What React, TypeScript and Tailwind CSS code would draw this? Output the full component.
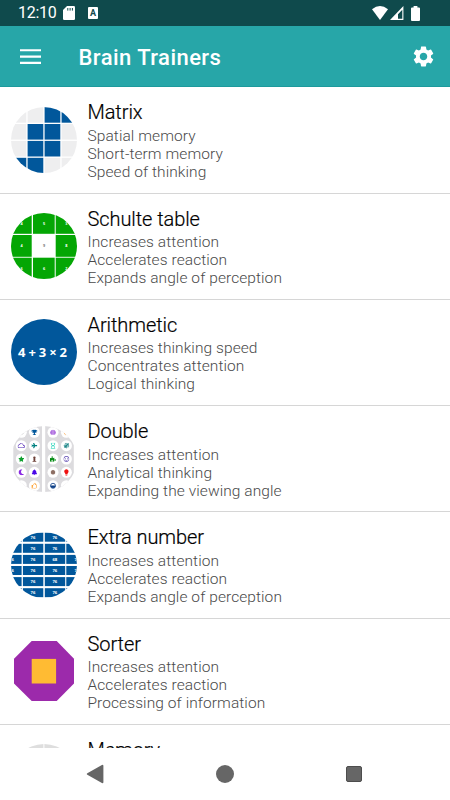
import type { ReactNode } from 'react'
import type { IconType } from 'react-icons'
import {
  FaBell,
  FaCertificate,
  FaChessPawn,
  FaMoon,
  FaPlane,
  FaPuzzlePiece,
  FaRegHourglass,
  FaRegSmile,
  FaRegThumbsUp,
  FaSatellite,
  FaStar,
  FaTrophy,
  FaBrain,
} from 'react-icons/fa'
import { MdLightbulb, MdOutlineCloud, MdSettings } from 'react-icons/md'

interface Trainer {
  title: string
  lines: string[]
  icon: ReactNode
}

function RoundIcon({ id, children }: { id: string; children: ReactNode }) {
  return (
    <svg className="w-[66px] h-[66px]" viewBox="0 0 66 66">
      <clipPath id={id}>
        <circle cx="33" cy="33" r="33" />
      </clipPath>
      <g clipPath={`url(#${id})`}>{children}</g>
    </svg>
  )
}

function MatrixIcon() {
  const cells = ['0011', '0110', '0110', '1100']

  return (
    <RoundIcon id="matrix">
      {cells.map((row, y) =>
        row.split('').map((cell, x) => (
          <rect
            key={`${x}-${y}`}
            x={x * 17 - 0.4}
            y={y * 16.9 + 0.1}
            width="15.7"
            height="15.6"
            fill={cell === '1' ? '#01579b' : '#eeeeef'}
          />
        ))
      )}
    </RoundIcon>
  )
}

function SchulteIcon() {
  const starts = [-1, 22, 44.7]
  const numbers = [['4', '5', '3'], ['4', '9', '8'], ['6', '6', '2']]
  const centers = [10.5, 33, 55.3]

  return (
    <RoundIcon id="schulte">
      {numbers.map((row, y) =>
        row.map((n, x) => {
          const middle = x === 1 && y === 1
          return (
            <g key={`${x}-${y}`}>
              <rect
                x={starts[x]}
                y={starts[y]}
                width="21.7"
                height="21.8"
                fill={middle ? '#fff' : '#04a604'}
              />
              <text
                x={centers[x]}
                y={centers[y] + 1.4}
                textAnchor="middle"
                className="font-['Open_Sans',sans-serif] text-[3.8px] font-bold"
                fill={middle ? '#777' : '#fff'}
              >
                {n}
              </text>
            </g>
          )
        })
      )}
    </RoundIcon>
  )
}

function ArithmeticIcon() {
  return (
    <RoundIcon id="arithmetic">
      <rect width="66" height="66" fill="#01579b" />
      <text
        x="31.5"
        y="38"
        textAnchor="middle"
        textLength="49"
        className="font-['Open_Sans',sans-serif] text-[13px] font-bold"
        fill="#fff"
      >
        4 + 3 × 2
      </text>
    </RoundIcon>
  )
}

function DoubleIcon() {
  const columns = [10.3, 23.4, 42, 55.4]
  const items: ([IconType, string] | null)[][] = [
    [null, [FaTrophy, '#01579b'], [FaBrain, '#b070e0'], null],
    [[MdOutlineCloud, '#4a1fb0'], [FaPlane, '#008080'], [FaRegHourglass, '#1dd3b8'], [FaSatellite, '#20888a']],
    [[FaStar, '#10a030'], [FaChessPawn, '#6d4038'], [FaPuzzlePiece, '#008a10'], [FaRegSmile, '#5a45b0']],
    [[FaMoon, '#8a2be2'], [FaBell, '#4a08e8'], [FaCertificate, '#8d6e63'], [MdLightbulb, '#f01010']],
    [null, [FaRegThumbsUp, '#ffa030'], null, null],
  ]

  return (
    <RoundIcon id="double">
      <rect x="2.3" width="28.7" height="66" fill="#dcdbde" />
      <rect x="34.2" width="28.6" height="66" fill="#dcdbde" />
      {items.map((row, y) =>
        row.map((item, x) => {
          const cx = columns[x]
          const cy = 6.3 + y * 13.35
          const Icon = item?.[0]
          let size = 6
          if (Icon === MdOutlineCloud || Icon === MdLightbulb) size = 7.4
          if (Icon === FaCertificate) size = 5
          return (
            <g key={`${x}-${y}`}>
              <circle cx={cx} cy={cy} r="5.5" fill="#fff" />
              {Icon && (
                <Icon x={cx - size / 2} y={cy - size / 2} size={size} color={item[1]} />
              )}
            </g>
          )
        })
      )}
      <path d="m10.4 8.8 1.8-1.8" stroke="#777" strokeWidth="0.9" />
      <path d="m53 7.2 1.7 1.6" stroke="#ffa040" strokeWidth="0.9" />
      {/* Half-filled drop */}
      <circle cx="42" cy="59.8" r="2.5" fill="#fff" stroke="#0d3f86" strokeWidth="0.8" />
      <path d="M39.5 59.6h5a2.5 2.5 0 0 1-5 0z" fill="#0d3f86" />
    </RoundIcon>
  )
}

function ExtraNumberIcon() {
  const starts = [-9.8, 11.9, 33.8, 55.3]
  const labels = ['6', '76', '76', '7']
  const labelX = [1.6, 22, 43.8, 64.6]

  return (
    <RoundIcon id="extra">
      {[0, 1, 2, 3, 4, 5].map((y) =>
        starts.map((x, i) => {
          const side = i === 0 || i === 3
          return (
            <g key={`${i}-${y}`}>
              <rect x={x} y={y * 11.1 + 0.7} width="20.4" height="9" fill="#01579b" />
              {(!side || y === 2 || y === 3) && (
                <text
                  x={labelX[i]}
                  y={y * 11.1 + 6.6}
                  textAnchor="middle"
                  className="font-['Open_Sans',sans-serif] text-[4.2px] font-bold"
                  fill="#fff"
                >
                  {i === 2 && y === 2 ? '68' : labels[i]}
                </text>
              )}
            </g>
          )
        })
      )}
    </RoundIcon>
  )
}

function SorterIcon() {
  return (
    <svg className="w-[66px] h-[66px]" viewBox="0 0 66 66">
      <path d="M20.7 3h25L63 20.7v24.9L45.7 63h-25L3 45.6V20.7z" fill="#9c2aab" />
      <rect x="20.7" y="20.9" width="24.4" height="24.6" fill="#ffbb33" />
    </svg>
  )
}

function MemoryIcon() {
  return (
    <RoundIcon id="memory">
      <rect width="32.4" height="66" fill="#dedede" />
      <rect x="33.4" width="33" height="66" fill="#dedede" />
    </RoundIcon>
  )
}

const trainers: Trainer[] = [
  {
    title: 'Matrix',
    lines: ['Spatial memory', 'Short-term memory', 'Speed of thinking'],
    icon: <MatrixIcon />,
  },
  {
    title: 'Schulte table',
    lines: ['Increases attention', 'Accelerates reaction', 'Expands angle of perception'],
    icon: <SchulteIcon />,
  },
  {
    title: 'Arithmetic',
    lines: ['Increases thinking speed', 'Concentrates attention', 'Logical thinking'],
    icon: <ArithmeticIcon />,
  },
  {
    title: 'Double',
    lines: ['Increases attention', 'Analytical thinking', 'Expanding the viewing angle'],
    icon: <DoubleIcon />,
  },
  {
    title: 'Extra number',
    lines: ['Increases attention', 'Accelerates reaction', 'Expands angle of perception'],
    icon: <ExtraNumberIcon />,
  },
  {
    title: 'Sorter',
    lines: ['Increases attention', 'Accelerates reaction', 'Processing of information'],
    icon: <SorterIcon />,
  },
  { title: 'Memory', lines: [], icon: <MemoryIcon /> },
]

function StatusBar() {
  return (
    <div className="flex h-[26px] shrink-0 items-center bg-[#0f4a4c] pl-[18px] pr-[30px] text-white">
      <span className="w-[39px] text-[16px] leading-[26px] tracking-[-0.3px]">12:10</span>
      {/* SD card */}
      <svg className="ml-[6px] h-[14px] w-[12px]" viewBox="0 0 12 14">
        <path d="M4 0h6.7Q12 0 12 1.3v11.4q0 1.3-1.3 1.3H1.3Q0 14 0 12.7V4z" fill="#fff" />
        <path d="M4.8 2v2.6M7.1 2v2.6M9.4 2v2.6" stroke="#0f4a4c" strokeWidth="1" />
      </svg>
      {/* Keyboard language badge */}
      <span className="ml-[13px] flex h-[12px] w-[10px] items-center justify-center rounded-[1px] bg-white text-[9px] leading-none font-bold text-[#0f4a4c]">
        A
      </span>
      <div className="ml-auto flex items-center">
        <svg className="h-[14px] w-[16px]" viewBox="0 0 16 14">
          <path d="M0 3.2Q8-3 16 3.2L8 14z" fill="#fff" />
        </svg>
        <svg className="ml-[2px] h-[14px] w-[14px]" viewBox="0 0 14 14">
          <path d="M13.4 0v14H0zM8 8.2v4.5h4.3V3.8z" fill="#fff" fillRule="evenodd" />
        </svg>
        <svg className="ml-[7px] h-[15px] w-[9px]" viewBox="0 0 9 15">
          <path d="M2.6 0h3.8v1.6H8q1 0 1 1V14q0 1-1 1H1q-1 0-1-1V2.6q0-1 1-1h1.6z" fill="#fff" />
        </svg>
      </div>
    </div>
  )
}

function Toolbar() {
  return (
    <header className="flex h-[61px] shrink-0 items-center border-b border-[#1d9a9c] bg-[#27a6a8] pl-[20px] pr-[14px] text-white">
      <svg className="h-[15px] w-[21px]" viewBox="0 0 21 15">
        <path d="M0 1.2h21M0 7.6h21M0 13.9h21" stroke="#fff" strokeWidth="2.1" />
      </svg>
      <h1 className="ml-[37.5px] pt-[2px] text-[22px] font-medium tracking-[0.45px]">Brain Trainers</h1>
      <MdSettings className="ml-auto" size={25} />
    </header>
  )
}

function NavBar() {
  return (
    <nav className="flex h-[52px] shrink-0 items-center justify-between bg-white pl-[86px] pr-[88px]">
      <svg className="h-[20px] w-[18px]" viewBox="0 0 18 20">
        <path d="M1.8 10 16.4 1.8v16.4z" fill="#666" stroke="#666" strokeWidth="2" strokeLinejoin="round" />
      </svg>
      <div className="h-[18px] w-[18px] rounded-full bg-[#666]" />
      <div className="h-[16px] w-[16px] rounded-[2px] border border-[#4d4d4d] bg-[#666]" />
    </nav>
  )
}

export default function App() {
  return (
    <div className="flex h-[800px] w-[450px] flex-col overflow-hidden bg-white font-[Roboto,sans-serif]">
      <StatusBar />
      <Toolbar />
      <main className="min-h-0 flex-1 overflow-hidden pt-[0.3px]">
        {trainers.map((trainer) => (
          <div
            key={trainer.title}
            className="flex h-[106.25px] border-b border-[#d6d6d6] pl-[11px]"
          >
            <div className="mt-[19.6px] h-[66px] shrink-0">{trainer.icon}</div>
            <div className="ml-[10.5px] pt-[12px]">
              <h2 className="text-[20px] leading-[26px] font-light tracking-[-0.08px] text-black [-webkit-text-stroke:0.2px_black]">
                {trainer.title}
              </h2>
              <div className="mt-[2.7px] text-[15.5px] leading-[17.9px] font-light tracking-[0.08px] text-[#4a4a4a]">
                {trainer.lines.map((line) => (
                  <p key={line}>{line}</p>
                ))}
              </div>
            </div>
          </div>
        ))}
      </main>
      <NavBar />
    </div>
  )
}
